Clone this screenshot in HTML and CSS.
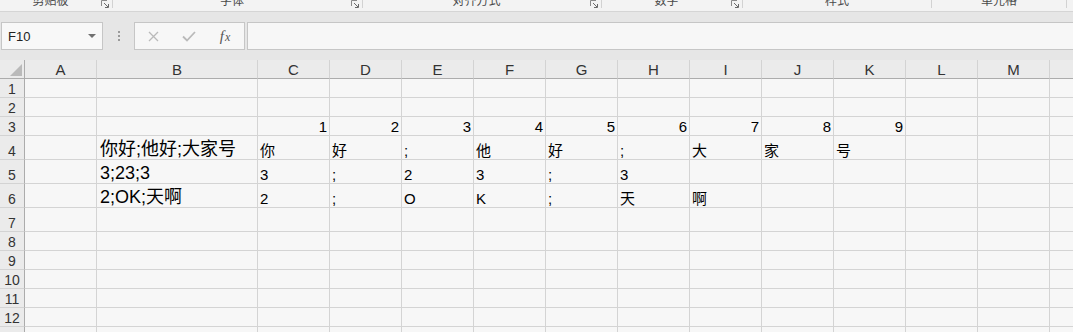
FILE: index.html
```html
<!DOCTYPE html>
<html lang="zh-CN">
<head>
<meta charset="utf-8">
<title>工作表</title>
<link rel="stylesheet" href="styles.css">
</head>
<body>
<div class="app">
  <div class="ribbon">
    <div class="group g1"><span class="label">剪贴板</span><svg class="launcher" viewBox="0 0 8 8"><path d="M0.5 6V0.5H6" fill="none" stroke="#8a8a8a"/><path d="M3 3L7 7M7.5 4V7.5H4" fill="none" stroke="#6a6a6a"/></svg></div>
    <div class="group g2"><span class="label">字体</span><svg class="launcher" viewBox="0 0 8 8"><path d="M0.5 6V0.5H6" fill="none" stroke="#8a8a8a"/><path d="M3 3L7 7M7.5 4V7.5H4" fill="none" stroke="#6a6a6a"/></svg></div>
    <div class="group g3"><span class="label">对齐方式</span><svg class="launcher" viewBox="0 0 8 8"><path d="M0.5 6V0.5H6" fill="none" stroke="#8a8a8a"/><path d="M3 3L7 7M7.5 4V7.5H4" fill="none" stroke="#6a6a6a"/></svg></div>
    <div class="group g4"><span class="label">数字</span><svg class="launcher" viewBox="0 0 8 8"><path d="M0.5 6V0.5H6" fill="none" stroke="#8a8a8a"/><path d="M3 3L7 7M7.5 4V7.5H4" fill="none" stroke="#6a6a6a"/></svg></div>
    <div class="group g5"><span class="label">样式</span></div>
    <div class="group g6"><span class="label">单元格</span></div>
  </div>

  <div class="fbar">
    <div class="namebox"><span class="ref">F10</span><span class="caret"></span></div>
    <div class="grip"><i></i><i></i><i></i></div>
    <div class="btns">
      <span class="btn"><svg width="11" height="11" viewBox="0 0 11 11"><path d="M1 1L10 10M10 1L1 10" stroke="#bababa" stroke-width="1.3"/></svg></span>
      <span class="btn"><svg width="14" height="11" viewBox="0 0 14 11"><path d="M1 5.5l4 4 8-8.5" fill="none" stroke="#bababa" stroke-width="1.8"/></svg></span>
      <span class="btn fx"><i>f</i><i class="x">x</i></span>
    </div>
    <div class="input"></div>
  </div>

  <div class="sheet">
    <div class="row">
      <div class="corner"><span class="tri"></span></div>
      <div class="ch">A</div><div class="ch">B</div><div class="ch">C</div><div class="ch">D</div><div class="ch">E</div><div class="ch">F</div><div class="ch">G</div><div class="ch">H</div><div class="ch">I</div><div class="ch">J</div><div class="ch">K</div><div class="ch">L</div><div class="ch">M</div><div class="ch">N</div>
    </div>
    <div class="row">
      <div class="rh">1</div>
      <div class="c"></div><div class="c"></div><div class="c"></div><div class="c"></div><div class="c"></div><div class="c"></div><div class="c"></div><div class="c"></div><div class="c"></div><div class="c"></div><div class="c"></div><div class="c"></div><div class="c"></div><div class="c"></div>
    </div>
    <div class="row">
      <div class="rh">2</div>
      <div class="c"></div><div class="c"></div><div class="c"></div><div class="c"></div><div class="c"></div><div class="c"></div><div class="c"></div><div class="c"></div><div class="c"></div><div class="c"></div><div class="c"></div><div class="c"></div><div class="c"></div><div class="c"></div>
    </div>
    <div class="row">
      <div class="rh">3</div>
      <div class="c"></div><div class="c"></div>
      <div class="c n">1</div><div class="c n">2</div><div class="c n">3</div><div class="c n">4</div><div class="c n">5</div><div class="c n">6</div><div class="c n">7</div><div class="c n">8</div><div class="c n">9</div>
      <div class="c"></div><div class="c"></div><div class="c"></div>
    </div>
    <div class="row t">
      <div class="rh">4</div>
      <div class="c"></div><div class="c big">你好;他好;大家号</div>
      <div class="c">你</div><div class="c">好</div><div class="c">;</div><div class="c">他</div><div class="c">好</div><div class="c">;</div><div class="c">大</div><div class="c">家</div><div class="c">号</div>
      <div class="c"></div><div class="c"></div><div class="c"></div>
    </div>
    <div class="row t">
      <div class="rh">5</div>
      <div class="c"></div><div class="c big">3;23;3</div>
      <div class="c">3</div><div class="c">;</div><div class="c">2</div><div class="c">3</div><div class="c">;</div><div class="c">3</div>
      <div class="c"></div><div class="c"></div><div class="c"></div><div class="c"></div><div class="c"></div><div class="c"></div>
    </div>
    <div class="row t">
      <div class="rh">6</div>
      <div class="c"></div><div class="c big">2;OK;天啊</div>
      <div class="c">2</div><div class="c">;</div><div class="c">O</div><div class="c">K</div><div class="c">;</div><div class="c">天</div><div class="c">啊</div>
      <div class="c"></div><div class="c"></div><div class="c"></div><div class="c"></div><div class="c"></div>
    </div>
    <div class="row t">
      <div class="rh">7</div>
      <div class="c"></div><div class="c"></div><div class="c"></div><div class="c"></div><div class="c"></div><div class="c"></div><div class="c"></div><div class="c"></div><div class="c"></div><div class="c"></div><div class="c"></div><div class="c"></div><div class="c"></div><div class="c"></div>
    </div>
    <div class="row">
      <div class="rh">8</div>
      <div class="c"></div><div class="c"></div><div class="c"></div><div class="c"></div><div class="c"></div><div class="c"></div><div class="c"></div><div class="c"></div><div class="c"></div><div class="c"></div><div class="c"></div><div class="c"></div><div class="c"></div><div class="c"></div>
    </div>
    <div class="row">
      <div class="rh">9</div>
      <div class="c"></div><div class="c"></div><div class="c"></div><div class="c"></div><div class="c"></div><div class="c"></div><div class="c"></div><div class="c"></div><div class="c"></div><div class="c"></div><div class="c"></div><div class="c"></div><div class="c"></div><div class="c"></div>
    </div>
    <div class="row">
      <div class="rh">10</div>
      <div class="c"></div><div class="c"></div><div class="c"></div><div class="c"></div><div class="c"></div><div class="c"></div><div class="c"></div><div class="c"></div><div class="c"></div><div class="c"></div><div class="c"></div><div class="c"></div><div class="c"></div><div class="c"></div>
    </div>
    <div class="row">
      <div class="rh">11</div>
      <div class="c"></div><div class="c"></div><div class="c"></div><div class="c"></div><div class="c"></div><div class="c"></div><div class="c"></div><div class="c"></div><div class="c"></div><div class="c"></div><div class="c"></div><div class="c"></div><div class="c"></div><div class="c"></div>
    </div>
    <div class="row">
      <div class="rh">12</div>
      <div class="c"></div><div class="c"></div><div class="c"></div><div class="c"></div><div class="c"></div><div class="c"></div><div class="c"></div><div class="c"></div><div class="c"></div><div class="c"></div><div class="c"></div><div class="c"></div><div class="c"></div><div class="c"></div>
    </div>
    <div class="row">
      <div class="rh">13</div>
      <div class="c"></div><div class="c"></div><div class="c"></div><div class="c"></div><div class="c"></div><div class="c"></div><div class="c"></div><div class="c"></div><div class="c"></div><div class="c"></div><div class="c"></div><div class="c"></div><div class="c"></div><div class="c"></div>
    </div>
  </div>
</div>
</body>
</html>
```

FILE: styles.css
```css
* { box-sizing: border-box; }

html, body {
  margin: 0;
  padding: 0;
}

body {
  width: 1073px;
  height: 332px;
  overflow: hidden;
  background: #f7f7f7;
  font-family: "Liberation Sans", "Noto Sans CJK SC", sans-serif;
  color: #111;
}

.app {
  display: flex;
  flex-direction: column;
  height: 332px;
}

/* ---------- ribbon group labels (cut off) ---------- */
.ribbon {
  display: flex;
  height: 12px;
  background: #f3f3f3;
  border-bottom: 1px solid #d5d5d5;
  overflow: hidden;
  flex: none;
}

.group {
  display: flex;
  align-items: flex-start;
  height: 8px;
  border-right: 1px solid #d2d2d2;
  flex: none;
}

.g1 { width: 113px; }
.g2 { width: 250px; }
.g3 { width: 239px; }
.g4 { width: 141px; }
.g5 { width: 189px; }
.g6 { width: 135px; }

.label {
  flex: 1;
  text-align: center;
  font-size: 12px;
  line-height: 12px;
  margin-top: -5px;
  color: #4a4a4a;
  white-space: nowrap;
}

.launcher {
  width: 8px;
  height: 8px;
  margin-right: 3px;
  flex: none;
}

/* ---------- formula bar ---------- */
.fbar {
  display: flex;
  height: 48px;
  padding: 10px 0 10px 1px;
  background: #e6e6e6;
  flex: none;
}

.namebox {
  width: 102px;
  height: 28px;
  border: 1px solid #c6c6c6;
  background: #f8f8f8;
  display: flex;
  align-items: center;
  padding: 0 6px 0 6px;
}

.ref {
  flex: 1;
  font-size: 13px;
  color: #222;
}

.caret {
  width: 0;
  height: 0;
  border-left: 4px solid transparent;
  border-right: 4px solid transparent;
  border-top: 4px solid #707070;
}

.grip {
  width: 31px;
  display: flex;
  flex-direction: column;
  align-items: center;
  justify-content: center;
  gap: 2px;
}

.grip i {
  display: block;
  width: 2px;
  height: 2px;
  background: #9a9a9a;
}

.btns {
  width: 111px;
  height: 28px;
  margin-right: 2px;
  border: 1px solid #c6c6c6;
  background: #f7f7f7;
  display: flex;
  align-items: center;
}

.btn {
  width: 36px;
  display: flex;
  justify-content: center;
  align-items: center;
}

.fx {
  font-family: "Liberation Serif", serif;
  font-size: 15px;
  color: #555;
  align-items: baseline;
}

.fx .x {
  font-size: 12px;
  margin-left: 1px;
}

.input {
  flex: 1;
  height: 28px;
  border: 1px solid #c6c6c6;
  border-right: none;
  background: #f7f7f7;
}

/* ---------- sheet grid ---------- */
.sheet {
  flex: 1;
  overflow: hidden;
  width: 1073px;
}

.row {
  display: grid;
  grid-template-columns: 25px 72px 161px repeat(12, 72px);
  height: 19px;
}

.row.t { height: 24px; }

.row > div {
  height: 100%;
  display: flex;
  align-items: flex-end;
  white-space: nowrap;
  overflow: hidden;
}

.corner {
  background: #ebebeb;
  border-right: 1px solid #acacac;
  border-bottom: 1px solid #acacac;
  justify-content: flex-end;
  padding: 0 2px 2px 0;
}

.tri {
  width: 0;
  height: 0;
  border-left: 12px solid transparent;
  border-bottom: 12px solid #bababa;
}

.ch {
  background: #ebebeb;
  border-right: 1px solid #d3d3d3;
  border-bottom: 1px solid #acacac;
  justify-content: center;
  font-size: 15px;
  line-height: 16px;
  color: #333;
}

.rh {
  background: #ebebeb;
  border-right: 1px solid #acacac;
  border-bottom: 1px solid #d3d3d3;
  justify-content: center;
  font-size: 14px;
  line-height: 16px;
  color: #333;
}

.c {
  border-right: 1px solid #d4d4d4;
  border-bottom: 1px solid #d4d4d4;
  padding: 0 2px 0 2px;
  font-size: 15px;
  line-height: 17px;
  color: #000;
}

.c.n { justify-content: flex-end; }

.c.big {
  font-size: 18px;
  line-height: 19px;
  padding-left: 3px;
}
```
